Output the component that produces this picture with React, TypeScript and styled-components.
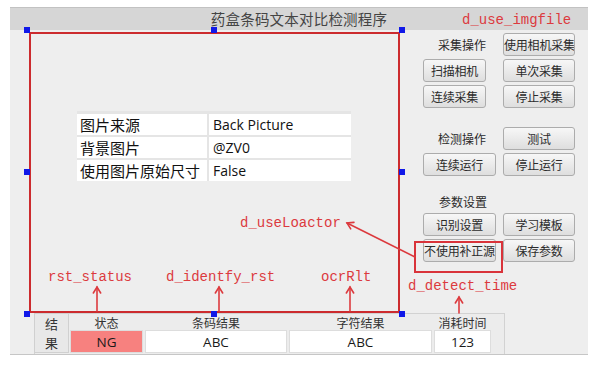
import React from 'react'
import styled, { createGlobalStyle } from 'styled-components'

const GlobalStyle = createGlobalStyle`
    * {
        box-sizing: border-box;
    }
    body {
        margin: 0;
        background: #ffffff;
        font-family: 'Noto Sans CJK SC', 'Noto Sans', sans-serif;
    }
`

const CJK = `'Noto Sans CJK SC', 'Noto Sans', sans-serif`
const LATIN = `'Open Sans', 'Noto Sans CJK SC', sans-serif`
const MONO = `'Liberation Mono', 'DejaVu Sans Mono', monospace`
const NOTE_RED = '#dc3a3e'

const Window = styled.div`
    position: relative;
    margin: 7px 0 0 10px;
    width: 578px;
    height: 348px;
    background: #eeeeee;
    border-bottom: 1px solid #c6c6c6;
    display: flex;
    flex-direction: column;
`

const TitleBar = styled.div`
    height: 23px;
    flex: none;
    background: #d6d6d6;
    border-top: 1px solid #c2c2c2;
    display: flex;
    align-items: center;
    justify-content: center;
`

const Title = styled.div`
    font-family: ${CJK};
    font-size: 14.5px;
    color: #444444;
    letter-spacing: 0.2px;
    line-height: 18px;
`

const Main = styled.div`
    height: 283px;
    flex: none;
    display: flex;
`

const LeftPane = styled.div`
    width: 413px;
    padding: 81px 0 0 67px;
`

const PropGrid = styled.div`
    width: 274px;
    background: #e5e5e5;
    padding-top: 3px;
    display: grid;
    grid-template-columns: 130px 1fr;
    grid-auto-rows: 21px;
    gap: 2px;
`

const PropCell = styled.div<{ $value?: boolean }>`
    background: #ffffff;
    display: flex;
    align-items: center;
    padding-left: ${(p) => (p.$value ? 4 : 3)}px;
    font-family: ${(p) => (p.$value ? LATIN : CJK)};
    font-size: ${(p) => (p.$value ? 14 : 15)}px;
    color: #111111;
    white-space: nowrap;
`

const RightPane = styled.div`
    width: 152px;
    padding-top: 3px;
    display: flex;
    flex-direction: column;
`

const ButtonGroup = styled.div<{ $cols: string; $gap: number; $top: number }>`
    display: grid;
    grid-template-columns: ${(p) => p.$cols};
    column-gap: ${(p) => p.$gap}px;
    row-gap: 3px;
    grid-auto-rows: 23px;
    margin-top: ${(p) => p.$top}px;
`

const Label = styled.div`
    font-family: ${CJK};
    font-size: 12px;
    color: #2a2a2a;
    padding-left: 15px;
    display: flex;
    align-items: center;
    white-space: nowrap;
`

const SoloLabel = styled(Label)`
    height: 20px;
    margin-top: 15px;
    padding-left: 16px;
`

const Button = styled.button`
    margin: 0;
    padding: 0;
    height: 100%;
    width: 100%;
    font-family: ${CJK};
    font-size: 12px;
    font-weight: 400;
    color: #2b2b2b;
    background: linear-gradient(#f7f7f7, #dedede);
    border: 1px solid #acacac;
    border-radius: 3px;
    white-space: nowrap;
    overflow: hidden;
    letter-spacing: -0.2px;
`

const ResultTable = styled.div`
    margin-left: 24px;
    width: 471px;
    height: 41px;
    flex: none;
    display: flex;
    border: 1px solid #d2d2d2;
    border-bottom: none;
    background: #ececec;
`

const ResultLabel = styled.div`
    width: 35px;
    height: 40px;
    background: #e8e8e8;
    border: 1px solid #d0d0d0;
    margin-left: -1px;
    margin-top: -1px;
    display: flex;
    flex-direction: column;
    align-items: center;
    justify-content: center;
    font-family: ${CJK};
    font-size: 13px;
    color: #333333;
`

const LabelChar = styled.span`
    display: block;
    height: 19px;
    line-height: 19px;
`

const ResultColumns = styled.div`
    display: flex;
    gap: 2px;
    margin-left: 1px;
`

const ResultColumn = styled.div<{ $w: number }>`
    width: ${(p) => p.$w}px;
    display: flex;
    flex-direction: column;
`

const ResultHead = styled.div`
    height: 16px;
    display: flex;
    align-items: center;
    justify-content: center;
    font-family: ${CJK};
    font-size: 12px;
    color: #333333;
`

const ResultValue = styled.div<{ $bg?: string }>`
    height: 23px;
    background: ${(p) => p.$bg || '#ffffff'};
    border: 1px solid #dddddd;
    display: flex;
    align-items: center;
    justify-content: center;
    font-family: ${LATIN};
    font-size: 13.5px;
    color: #1a1a1a;
`

/* annotation layer drawn over the screenshot */

const NoteBox = styled.div<{ $l: number; $t: number; $w: number; $h: number; $c: string }>`
    position: absolute;
    left: ${(p) => p.$l}px;
    top: ${(p) => p.$t}px;
    width: ${(p) => p.$w}px;
    height: ${(p) => p.$h}px;
    border: 2px solid ${(p) => p.$c};
    pointer-events: none;
`

const Handle = styled.div<{ $x: number; $y: number }>`
    position: absolute;
    left: ${(p) => p.$x - 3}px;
    top: ${(p) => p.$y - 3}px;
    width: 6px;
    height: 6px;
    background: #1018e8;
`

const Note = styled.div<{ $l: number; $t: number }>`
    position: absolute;
    left: ${(p) => p.$l}px;
    top: ${(p) => p.$t}px;
    font-family: ${MONO};
    font-size: 14px;
    line-height: 16px;
    color: ${NOTE_RED};
    white-space: nowrap;
`

const ArrowLayer = styled.svg`
    position: absolute;
    left: 0;
    top: 0;
    pointer-events: none;
`

const props = [
    ['图片来源', 'Back Picture'],
    ['背景图片', '@ZV0'],
    ['使用图片原始尺寸', 'False'],
]

const results = [
    { head: '状态', value: 'NG', w: 73, bg: '#f7817f' },
    { head: '条码结果', value: 'ABC', w: 142 },
    { head: '字符结果', value: 'ABC', w: 143 },
    { head: '消耗时间', value: '123', w: 57 },
]

const handles = [
    [17, 23], [204, 23], [392, 23],
    [17, 165], [392, 165],
    [17, 307], [204, 307], [392, 307],
]

const notes: [string, number, number][] = [
    ['d_use_imgfile', 452, 5],
    ['d_useLoactor', 230, 208],
    ['rst_status', 38, 262],
    ['d_identfy_rst', 156, 262],
    ['ocrRlt', 311, 262],
    ['d_detect_time', 398, 271],
]

// arrow from tail (x1,y1) to tip (x2,y2)
const Arrow: React.FC<{ x1: number; y1: number; x2: number; y2: number }> = ({ x1, y1, x2, y2 }) => {
    const a = Math.atan2(y1 - y2, x1 - x2)
    const len = 7
    const spread = 0.55
    const p1 = [x2 + len * Math.cos(a + spread), y2 + len * Math.sin(a + spread)]
    const p2 = [x2 + len * Math.cos(a - spread), y2 + len * Math.sin(a - spread)]
    return (
        <g stroke={NOTE_RED} strokeWidth={1.6} fill="none" strokeLinecap="round">
            <line x1={x1} y1={y1} x2={x2} y2={y2} />
            <polyline points={`${p1[0]},${p1[1]} ${x2},${y2} ${p2[0]},${p2[1]}`} />
        </g>
    )
}

export default function App() {
    return (
        <>
            <GlobalStyle />
            <Window>
                <TitleBar>
                    <Title>药盒条码文本对比检测程序</Title>
                </TitleBar>
                <Main>
                    <LeftPane>
                        <PropGrid>
                            {props.map(([k, v]) => (
                                <React.Fragment key={k}>
                                    <PropCell>{k}</PropCell>
                                    <PropCell $value>{v}</PropCell>
                                </React.Fragment>
                            ))}
                        </PropGrid>
                    </LeftPane>
                    <RightPane>
                        <ButtonGroup $cols="63px 72px" $gap={17} $top={0}>
                            <Label>采集操作</Label>
                            <Button>使用相机采集</Button>
                            <Button>扫描相机</Button>
                            <Button>单次采集</Button>
                            <Button>连续采集</Button>
                            <Button>停止采集</Button>
                        </ButtonGroup>
                        <ButtonGroup $cols="73px 72px" $gap={7} $top={19}>
                            <Label>检测操作</Label>
                            <Button>测试</Button>
                            <Button>连续运行</Button>
                            <Button>停止运行</Button>
                        </ButtonGroup>
                        <SoloLabel>参数设置</SoloLabel>
                        <ButtonGroup $cols="73px 72px" $gap={7} $top={2}>
                            <Button>识别设置</Button>
                            <Button>学习模板</Button>
                            <Button>不使用补正源</Button>
                            <Button>保存参数</Button>
                        </ButtonGroup>
                    </RightPane>
                </Main>
                <ResultTable>
                    <ResultLabel>
                        <LabelChar>结</LabelChar>
                        <LabelChar>果</LabelChar>
                    </ResultLabel>
                    <ResultColumns>
                        {results.map((r) => (
                            <ResultColumn key={r.head} $w={r.w}>
                                <ResultHead>{r.head}</ResultHead>
                                <ResultValue $bg={r.bg}>{r.value}</ResultValue>
                            </ResultColumn>
                        ))}
                    </ResultColumns>
                </ResultTable>

                <NoteBox $l={19} $t={25} $w={371} $h={281} $c="#cc2b2e" />
                <NoteBox $l={404} $t={234} $w={89} $h={32} $c="#d9333a" />
                {handles.map(([x, y]) => (
                    <Handle key={`${x}-${y}`} $x={x} $y={y} />
                ))}
                {notes.map(([t, l, top]) => (
                    <Note key={t} $l={l} $t={top}>
                        {t}
                    </Note>
                ))}
                <ArrowLayer width={578} height={348}>
                    <Arrow x1={87} y1={304} x2={87} y2={280} />
                    <Arrow x1={209} y1={304} x2={209} y2={280} />
                    <Arrow x1={340} y1={304} x2={340} y2={280} />
                    <Arrow x1={449} y1={306} x2={449} y2={290} />
                    <Arrow x1={405} y1={250} x2={337} y2={216} />
                </ArrowLayer>
            </Window>
        </>
    )
}
